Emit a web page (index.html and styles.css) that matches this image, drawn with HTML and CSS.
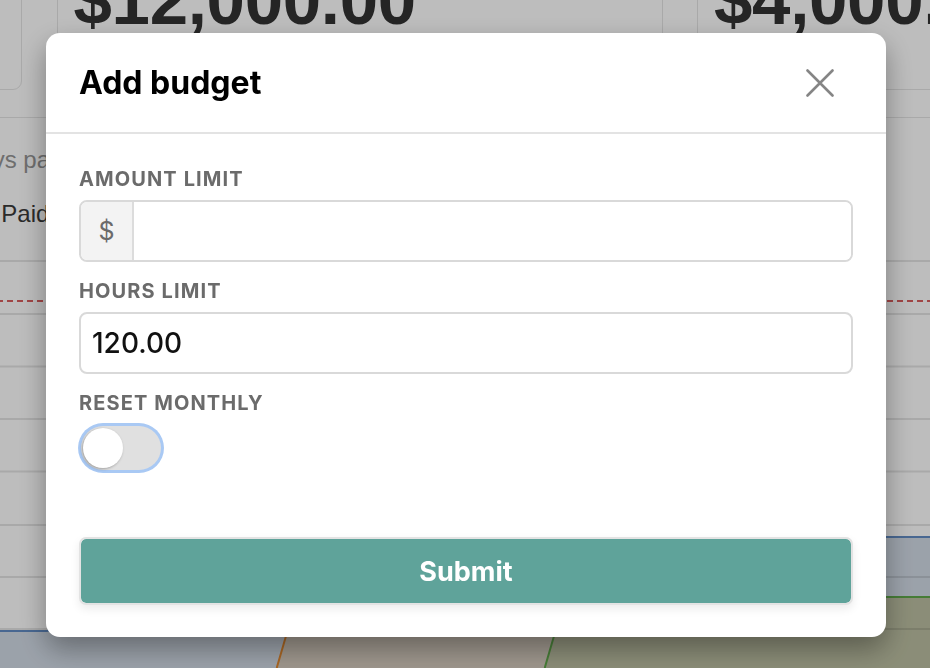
FILE: index.html
```html
<!DOCTYPE html>
<html lang="en">
<head>
<meta charset="utf-8">
<title>Budgets</title>
<link rel="stylesheet" href="styles.css">
</head>
<body>
<div class="page">
  <section class="stats">
    <div class="stat-card">
      <div class="stat-label">Hours logged</div>
      <div class="stat-value">$9,850.00</div>
      <div class="stat-sub">Last 30 days</div>
    </div>
    <div class="stat-card">
      <div class="stat-label">Amount limit</div>
      <div class="stat-value">$12,000.00</div>
      <div class="stat-sub">Monthly budget</div>
    </div>
    <div class="stat-card">
      <div class="stat-label">Remaining</div>
      <div class="stat-value">$4,000.00</div>
      <div class="stat-sub">Until reset</div>
    </div>
  </section>

  <section class="panel">
    <div class="panel-head">
      <div class="panel-title">Budget usage</div>
      <div class="panel-meta">
        <div class="meta-label">Days paid</div>
        <div class="meta-value">14 Paid</div>
      </div>
    </div>
    <svg class="chart" width="1885" height="450" viewBox="0 0 1885 450">
      <path d="M0,382 L629,382 L900,360 L1200,320 L1469,288 L1885,288 L1885,450 L0,450 Z" fill="#d2dbe6"/>
      <path d="M0,460 L855,460 L860,418 L869,387 L885,350 L1200,338 L1469,348 L1885,348 L1885,460 Z" fill="#d6ccbf"/>
      <path d="M0,460 L1123,460 L1128,418 L1137,387 L1160,370 L1469,348 L1885,348 L1885,460 Z" fill="#bcbfa2"/>
      <g stroke="#000" stroke-opacity="0.1" stroke-width="2">
        <line x1="0" y1="12" x2="1885" y2="12"/>
        <line x1="0" y1="65" x2="1885" y2="65"/>
        <line x1="0" y1="117.5" x2="1885" y2="117.5"/>
        <line x1="0" y1="170" x2="1885" y2="170"/>
        <line x1="0" y1="222.5" x2="1885" y2="222.5"/>
        <line x1="0" y1="276" x2="1885" y2="276"/>
        <line x1="0" y1="328" x2="1885" y2="328"/>
        <line x1="0" y1="380" x2="1885" y2="380"/>
      </g>
      <line x1="0" y1="52" x2="1885" y2="52" stroke="#d85d5d" stroke-width="2" stroke-dasharray="6 4"/>
      <path d="M0,382 L629,382 L900,360 L1200,320 L1469,288 L1885,288" fill="none" stroke="#628cc4" stroke-width="2"/>
      <path d="M855,460 L860,418 L869,387 L885,350 L1200,338 L1469,348" fill="none" stroke="#e3892f" stroke-width="2"/>
      <path d="M1123,460 L1128,418 L1137,387 L1160,370 L1469,348 L1885,348" fill="none" stroke="#5fa84a" stroke-width="2"/>
    </svg>
  </section>
</div>

<div class="overlay">
  <div class="modal" role="dialog" aria-labelledby="modal-title">
    <header class="modal-header">
      <h2 id="modal-title" class="modal-title">Add budget</h2>
      <button class="close-btn" type="button" aria-label="Close">
        <svg width="28" height="28" viewBox="0 0 28 28">
          <path d="M1.5 1.5 L26.5 26.5 M26.5 1.5 L1.5 26.5" stroke="#858585" stroke-width="2.6" stroke-linecap="round"/>
        </svg>
      </button>
    </header>
    <form class="modal-body">
      <div class="field">
        <label class="field-label" for="amount">Amount limit</label>
        <div class="input-group">
          <span class="input-prefix">$</span>
          <input id="amount" class="input input-bare" type="text" value="">
        </div>
      </div>
      <div class="field">
        <label class="field-label" for="hours">Hours limit</label>
        <input id="hours" class="input" type="text" value="120.00">
      </div>
      <div class="field field-toggle">
        <span class="field-label">Reset monthly</span>
        <span class="switch" role="switch" aria-checked="false"><span class="switch-knob"></span></span>
      </div>
      <button class="submit-btn" type="button">Submit</button>
    </form>
  </div>
</div>
</body>
</html>
```

FILE: styles.css
```css
* {
  box-sizing: border-box;
}

html, body {
  margin: 0;
  height: 100%;
}

body {
  overflow: hidden;
  background: #ffffff;
  font-family: "Liberation Sans", Arial, sans-serif;
  color: #333333;
}

/* Page behind the dialog, scrolled horizontally */
.page {
  width: 1887px;
  margin-left: -584px;
}

.stats {
  display: flex;
  gap: 34.5px;
  margin-top: -82px;
}

.stat-card {
  width: 606px;
  height: 172px;
  border: 1px solid #e5e5e5;
  border-radius: 9px;
  padding: 19px 16px 0;
}

.stat-label {
  font-size: 15px;
  line-height: 20px;
  color: #888888;
  margin-bottom: 8px;
}

.stat-value {
  font-size: 69px;
  line-height: 69px;
  font-weight: 700;
  color: #333333;
  letter-spacing: -0.3px;
}

.stat-sub {
  margin-top: 6px;
  font-size: 16px;
  line-height: 20px;
  color: #999999;
}

.panel {
  margin-top: 27px;
  border: 1px solid #e5e5e5;
  border-radius: 9px;
  height: 720px;
  overflow: hidden;
}

.panel-head {
  display: grid;
  grid-template-columns: 545px 1fr;
  padding: 27px 0 0 0;
}

.panel-title {
  padding-left: 24px;
  font-size: 24px;
  line-height: 30px;
  font-weight: 700;
}

.panel-meta {
  font-size: 24px;
  line-height: 30px;
}

.meta-label {
  color: #959595;
}

.meta-value {
  margin-top: 24px;
  padding-left: 6px;
  color: #3a3a3a;
}

.chart {
  display: block;
  margin-top: 20px;
}

/* Dialog */
.overlay {
  position: fixed;
  inset: 0;
  background: rgba(0, 0, 0, 0.26);
  display: flex;
  align-items: center;
  justify-content: center;
  padding: 2px 0 0 2px;
}

.modal {
  width: 840px;
  background: #ffffff;
  border-radius: 14px;
  box-shadow: 0 12px 28px rgba(0, 0, 0, 0.35);
  font-family: "Inter", "Liberation Sans", sans-serif;
  overflow: hidden;
}

.modal-header {
  height: 101px;
  display: flex;
  align-items: center;
  justify-content: space-between;
  padding: 0 52px 0 33px;
  border-bottom: 2px solid #e3e3e3;
}

.modal-title {
  margin: 0;
  font-size: 32px;
  font-weight: 700;
  color: #000000;
  letter-spacing: 0;
}

.close-btn {
  display: flex;
  padding: 0;
  border: 0;
  background: none;
  cursor: pointer;
}

.modal-body {
  display: flex;
  flex-direction: column;
  padding: 33px 33px 32px;
  margin: 0;
}

.field {
  display: flex;
  flex-direction: column;
  margin-bottom: 17px;
}

.field-label {
  font-size: 20px;
  line-height: 24px;
  font-weight: 700;
  letter-spacing: 1.1px;
  text-transform: uppercase;
  color: #6b6b6b;
  margin-bottom: 9px;
}

.input-group {
  display: flex;
  height: 62px;
  border: 2px solid #d9d9d9;
  border-radius: 8px;
  overflow: hidden;
}

.input-prefix {
  width: 53px;
  display: flex;
  align-items: center;
  justify-content: center;
  background: #f3f3f3;
  border-right: 2px solid #dcdcdc;
  font-size: 25px;
  color: #6b6b6b;
}

.input {
  height: 62px;
  width: 100%;
  border: 2px solid #d9d9d9;
  border-radius: 8px;
  padding: 0 11px;
  font-family: "Inter", "Liberation Sans", sans-serif;
  font-size: 28px;
  font-weight: 500;
  color: #111111;
  background: #ffffff;
  outline: none;
}

.input-bare {
  flex: 1;
  height: auto;
  border: 0;
  border-radius: 0;
}

.field-toggle {
  margin-bottom: 0;
}

.field-toggle .field-label {
  margin-bottom: 11px;
}

.switch {
  display: flex;
  align-items: center;
  width: 80px;
  height: 44px;
  margin-left: 2px;
  padding: 2px;
  border-radius: 22px;
  background: #e0e0e0;
  box-shadow: 0 0 0 3px #a9c9f4;
}

.switch-knob {
  width: 40px;
  height: 40px;
  border-radius: 50%;
  background: #ffffff;
  box-shadow: -1px 1px 3px rgba(0, 0, 0, 0.3);
}

.submit-btn {
  margin-top: 67px;
  height: 68px;
  width: 100%;
  border: 2px solid #e3e3e3;
  border-radius: 7px;
  background: #5fa39a;
  background-clip: padding-box;
  color: #ffffff;
  font-family: "Inter", "Liberation Sans", sans-serif;
  font-size: 27px;
  font-weight: 700;
  box-shadow: 0 4px 10px rgba(0, 0, 0, 0.08);
  cursor: pointer;
}
```
